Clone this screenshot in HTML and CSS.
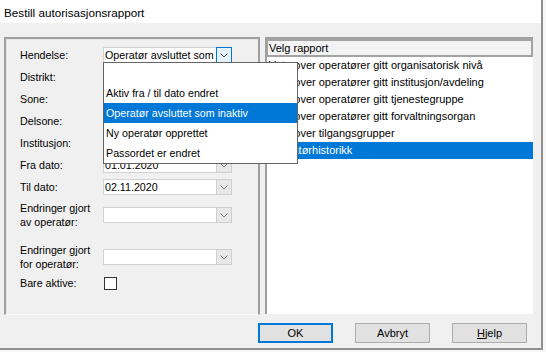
FILE: index.html
```html
<!DOCTYPE html>
<html>
<head>
    <title>Bestill autorisasjonsrapport</title>
    <link rel="stylesheet" href="styles.css">
</head>
<body>
    <div class="window">
        <div class="titlebar">Bestill autorisasjonsrapport</div>
        <div class="content">
            <div class="panels">
                <div class="filters">
                    <div class="row">
                        <label>Hendelse:</label>
                        <div class="field">
                            <div class="combo focused">
                                <span class="value">Operatør avsluttet som</span>
                                <span class="drop"><svg width="8" height="5" viewBox="0 0 8 5"><polyline points="0.5,0.5 4,4 7.5,0.5" fill="none" stroke="#444" stroke-width="1"/></svg></span>
                            </div>
                            <ul class="dropdown">
                                <li>&nbsp;</li>
                                <li>Aktiv fra / til dato endret</li>
                                <li class="selected">Operatør avsluttet som inaktiv</li>
                                <li>Ny operatør opprettet</li>
                                <li>Passordet er endret</li>
                            </ul>
                        </div>
                    </div>
                    <div class="row">
                        <label>Distrikt:</label>
                        <div class="field">
                            <div class="combo"><span class="value"></span><span class="drop"><svg width="8" height="5" viewBox="0 0 8 5"><polyline points="0.5,0.5 4,4 7.5,0.5" fill="none" stroke="#777" stroke-width="1"/></svg></span></div>
                        </div>
                    </div>
                    <div class="row">
                        <label>Sone:</label>
                        <div class="field">
                            <div class="combo"><span class="value"></span><span class="drop"><svg width="8" height="5" viewBox="0 0 8 5"><polyline points="0.5,0.5 4,4 7.5,0.5" fill="none" stroke="#777" stroke-width="1"/></svg></span></div>
                        </div>
                    </div>
                    <div class="row">
                        <label>Delsone:</label>
                        <div class="field">
                            <div class="combo"><span class="value"></span><span class="drop"><svg width="8" height="5" viewBox="0 0 8 5"><polyline points="0.5,0.5 4,4 7.5,0.5" fill="none" stroke="#777" stroke-width="1"/></svg></span></div>
                        </div>
                    </div>
                    <div class="row">
                        <label>Institusjon:</label>
                        <div class="field">
                            <div class="combo"><span class="value"></span><span class="drop"><svg width="8" height="5" viewBox="0 0 8 5"><polyline points="0.5,0.5 4,4 7.5,0.5" fill="none" stroke="#777" stroke-width="1"/></svg></span></div>
                        </div>
                    </div>
                    <div class="row">
                        <label>Fra dato:</label>
                        <div class="field">
                            <div class="combo"><span class="value">01.01.2020</span><span class="drop"><svg width="8" height="5" viewBox="0 0 8 5"><polyline points="0.5,0.5 4,4 7.5,0.5" fill="none" stroke="#777" stroke-width="1"/></svg></span></div>
                        </div>
                    </div>
                    <div class="row">
                        <label>Til dato:</label>
                        <div class="field">
                            <div class="combo"><span class="value">02.11.2020</span><span class="drop"><svg width="8" height="5" viewBox="0 0 8 5"><polyline points="0.5,0.5 4,4 7.5,0.5" fill="none" stroke="#777" stroke-width="1"/></svg></span></div>
                        </div>
                    </div>
                    <div class="row tall">
                        <label>Endringer gjort<br>av operatør:</label>
                        <div class="field">
                            <div class="combo"><span class="value"></span><span class="drop"><svg width="8" height="5" viewBox="0 0 8 5"><polyline points="0.5,0.5 4,4 7.5,0.5" fill="none" stroke="#777" stroke-width="1"/></svg></span></div>
                        </div>
                    </div>
                    <div class="row tall spaced">
                        <label>Endringer gjort<br>for operatør:</label>
                        <div class="field">
                            <div class="combo"><span class="value"></span><span class="drop"><svg width="8" height="5" viewBox="0 0 8 5"><polyline points="0.5,0.5 4,4 7.5,0.5" fill="none" stroke="#777" stroke-width="1"/></svg></span></div>
                        </div>
                    </div>
                    <div class="row short">
                        <label>Bare aktive:</label>
                        <div class="field">
                            <span class="checkbox"></span>
                        </div>
                    </div>
                </div>
                <div class="reports">
                    <div class="report-header">Velg rapport</div>
                    <ul class="report-list">
                        <li>Liste over operatører gitt organisatorisk nivå</li>
                        <li>Liste over operatører gitt institusjon/avdeling</li>
                        <li>Liste over operatører gitt tjenestegruppe</li>
                        <li>Liste over operatører gitt forvaltningsorgan</li>
                        <li>Liste over tilgangsgrupper</li>
                        <li class="selected">Operatørhistorikk</li>
                    </ul>
                </div>
            </div>
            <div class="buttons">
                <button class="default">OK</button>
                <button>Avbryt</button>
                <button><u>H</u>jelp</button>
            </div>
        </div>
    </div>
</body>
</html>
```

FILE: styles.css
```css
body {
    margin: 0;
    background-color: #f7f7f7;
    font-family: "Liberation Sans", Arial, sans-serif;
    font-size: 11px;
    color: #000;
}
.window {
    width: 541px;
    height: 348px;
    border-right: 2px solid #8f8f8f;
    border-bottom: 2px solid #8f8f8f;
}
.titlebar {
    height: 23px;
    box-sizing: border-box;
    padding: 2px 4px 0;
    line-height: 21px;
    font-size: 11.7px;
    background-color: #fff;
}
.content {
    height: 325px;
    box-sizing: border-box;
    padding: 14px 0 0 4px;
    background-color: #f0f0f0;
}
.panels {
    display: flex;
    gap: 5px;
}
.filters {
    width: 256px;
    height: 278px;
    box-sizing: border-box;
    padding: 5px 0 0 14px;
    font-size: 10.7px;
    border: 2px solid #a0a0a0;
    border-bottom: 1px solid #fbfbfb;
    box-shadow: inset 1px 1px 0 #e6e6e6;
}
.row {
    display: grid;
    grid-template-columns: 83px 129px;
    align-items: center;
    height: 22px;
}
.row.tall {
    height: 34px;
}
.row.spaced {
    margin-top: 8px;
}
.row.short {
    height: 18px;
}
.row label {
    line-height: 14px;
}
.field {
    position: relative;
    display: flex;
    align-items: center;
}
.combo {
    display: flex;
    width: 129px;
    height: 16px;
    box-sizing: border-box;
    border: 1px solid #d2d2d2;
    background-color: #fff;
}
.combo .value {
    flex: 1;
    padding-left: 1px;
    line-height: 14px;
    white-space: nowrap;
    overflow: hidden;
}
.combo .drop {
    width: 16px;
    display: flex;
    align-items: center;
    justify-content: center;
    box-sizing: border-box;
    background-color: #e8e8e8;
    border: 1px solid #cfcfcf;
    margin: -1px -1px -1px 0;
}
.combo.focused .drop {
    background-color: #e5f1fb;
    border-color: #0078d7;
}
.dropdown {
    position: absolute;
    top: 15px;
    left: 0;
    width: 193px;
    margin: 0;
    padding: 0;
    list-style: none;
    background-color: #fff;
    border: 1px solid #646464;
    z-index: 10;
}
.dropdown li {
    height: 20px;
    line-height: 21px;
    padding-left: 2px;
    white-space: nowrap;
}
.dropdown li.selected {
    background-color: #0078d7;
    color: #fff;
}
.checkbox {
    width: 13px;
    height: 13px;
    box-sizing: border-box;
    margin-left: 1px;
    border: 1px solid #333;
    background-color: #fff;
}
.reports {
    width: 268px;
    height: 277px;
    box-sizing: border-box;
    border-top: 2px solid #a0a0a0;
    border-left: 2px solid #a0a0a0;
    background-color: #fff;
}
.report-header {
    height: 18px;
    box-sizing: border-box;
    padding-left: 1px;
    line-height: 15px;
    border: 2px solid #a3a3a3;
    border-left: 1px solid #a3a3a3;
    background-color: #f3f3f3;
}
.report-list {
    margin: 0;
    padding: 0;
    list-style: none;
}
.report-list li {
    height: 17px;
    line-height: 17px;
    padding-left: 1px;
    white-space: nowrap;
}
.report-list li.selected {
    background-color: #0078d7;
    color: #fff;
}
.buttons {
    display: flex;
    justify-content: flex-end;
    gap: 22px;
    margin-top: 8px;
    padding-right: 14px;
}
button {
    width: 75px;
    height: 20px;
    padding: 0;
    font-family: "Liberation Sans", Arial, sans-serif;
    font-size: 11px;
    color: #000;
    background-color: #e1e1e1;
    border: 1px solid #adadad;
}
button.default {
    border: 2px solid #0078d7;
}
```
